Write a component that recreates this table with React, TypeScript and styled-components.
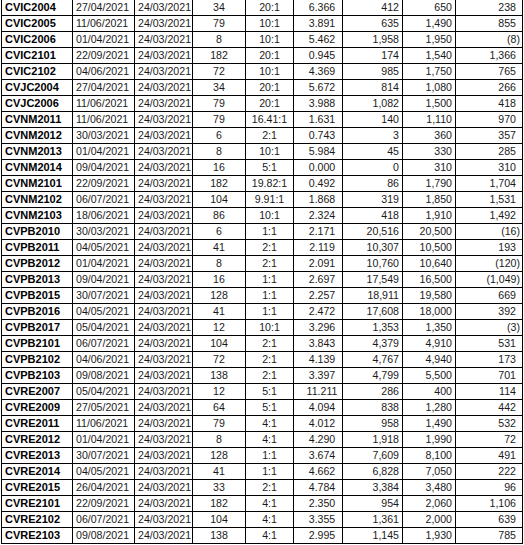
import React from "react";
import styled, { createGlobalStyle } from "styled-components";

const Global = createGlobalStyle`
  html, body { margin: 0; padding: 0; background: #fff; }
  body { font-family: "Liberation Sans", Arial, sans-serif; }
`;

type Row = [string, string, string, string, string, string, string, string];

const rows: Row[] = [
  ["CVIC2004", "27/04/2021", "34", "20:1", "6.366", "412", "650", "238"],
  ["CVIC2005", "11/06/2021", "79", "10:1", "3.891", "635", "1,490", "855"],
  ["CVIC2006", "01/04/2021", "8", "10:1", "5.462", "1,958", "1,950", "(8)"],
  ["CVIC2101", "22/09/2021", "182", "20:1", "0.945", "174", "1,540", "1,366"],
  ["CVIC2102", "04/06/2021", "72", "10:1", "4.369", "985", "1,750", "765"],
  ["CVJC2004", "27/04/2021", "34", "20:1", "5.672", "814", "1,080", "266"],
  ["CVJC2006", "11/06/2021", "79", "20:1", "3.988", "1,082", "1,500", "418"],
  ["CVNM2011", "11/06/2021", "79", "16.41:1", "1.631", "140", "1,110", "970"],
  ["CVNM2012", "30/03/2021", "6", "2:1", "0.743", "3", "360", "357"],
  ["CVNM2013", "01/04/2021", "8", "10:1", "5.984", "45", "330", "285"],
  ["CVNM2014", "09/04/2021", "16", "5:1", "0.000", "0", "310", "310"],
  ["CVNM2101", "22/09/2021", "182", "19.82:1", "0.492", "86", "1,790", "1,704"],
  ["CVNM2102", "06/07/2021", "104", "9.91:1", "1.868", "319", "1,850", "1,531"],
  ["CVNM2103", "18/06/2021", "86", "10:1", "2.324", "418", "1,910", "1,492"],
  ["CVPB2010", "30/03/2021", "6", "1:1", "2.171", "20,516", "20,500", "(16)"],
  ["CVPB2011", "04/05/2021", "41", "2:1", "2.119", "10,307", "10,500", "193"],
  ["CVPB2012", "01/04/2021", "8", "2:1", "2.091", "10,760", "10,640", "(120)"],
  ["CVPB2013", "09/04/2021", "16", "1:1", "2.697", "17,549", "16,500", "(1,049)"],
  ["CVPB2015", "30/07/2021", "128", "1:1", "2.257", "18,911", "19,580", "669"],
  ["CVPB2016", "04/05/2021", "41", "1:1", "2.472", "17,608", "18,000", "392"],
  ["CVPB2017", "05/04/2021", "12", "10:1", "3.296", "1,353", "1,350", "(3)"],
  ["CVPB2101", "06/07/2021", "104", "2:1", "3.843", "4,379", "4,910", "531"],
  ["CVPB2102", "04/06/2021", "72", "2:1", "4.139", "4,767", "4,940", "173"],
  ["CVPB2103", "09/08/2021", "138", "2:1", "3.397", "4,799", "5,500", "701"],
  ["CVRE2007", "05/04/2021", "12", "5:1", "11.211", "286", "400", "114"],
  ["CVRE2009", "27/05/2021", "64", "5:1", "4.094", "838", "1,280", "442"],
  ["CVRE2011", "11/06/2021", "79", "4:1", "4.012", "958", "1,490", "532"],
  ["CVRE2012", "01/04/2021", "8", "4:1", "4.290", "1,918", "1,990", "72"],
  ["CVRE2013", "30/07/2021", "128", "1:1", "3.674", "7,609", "8,100", "491"],
  ["CVRE2014", "04/05/2021", "41", "1:1", "4.662", "6,828", "7,050", "222"],
  ["CVRE2015", "26/04/2021", "33", "2:1", "4.784", "3,384", "3,480", "96"],
  ["CVRE2101", "22/09/2021", "182", "4:1", "2.350", "954", "2,060", "1,106"],
  ["CVRE2102", "06/07/2021", "104", "4:1", "3.355", "1,361", "2,000", "639"],
  ["CVRE2103", "09/08/2021", "138", "4:1", "2.995", "1,145", "1,930", "785"],
];

const widths = [71, 62, 58, 53, 48, 49, 60, 53, 67];

const Sheet = styled.table`
  border-collapse: collapse;
  table-layout: fixed;
  margin: -1px 0 0 1px;
  font-family: "Liberation Sans", Arial, sans-serif;
  color: #111;
`;

const Row = styled.tr`
  height: 16px;
`;

const Cell = styled.td<{ $align?: "left" | "center" | "right"; $bold?: boolean; $pr?: number; $pl?: number }>`
  border: 1px solid #000;
  padding: 0 ${(p) => p.$pr ?? 0}px 0 ${(p) => p.$pl ?? 0}px;
  height: 15px;
  line-height: 15px;
  white-space: nowrap;
  overflow: hidden;
  text-align: ${(p) => p.$align ?? "left"};
  font-size: ${(p) => (p.$bold ? "11px" : "10.6px")};
  font-weight: ${(p) => (p.$bold ? 700 : 400)};
  color: ${(p) => (p.$bold ? "#000" : "#1a1a1a")};
  vertical-align: middle;
`;

export default function App() {
  return (
    <>
      <Global />
      <Sheet>
        <colgroup>
          {widths.map((w, i) => (
            <col key={i} style={{ width: w }} />
          ))}
        </colgroup>
        <tbody>
          {rows.map((r) => {
            const neg = r[7].startsWith("(");
            return (
              <Row key={r[0]}>
                <Cell $bold $pl={3}>{r[0]}</Cell>
                <Cell $pl={3}>{r[1]}</Cell>
                <Cell $pl={3}>24/03/2021</Cell>
                <Cell $align="center">{r[2]}</Cell>
                <Cell $align="center">{r[3]}</Cell>
                <Cell $align="center" $pl={8}>{r[4]}</Cell>
                <Cell $align="right" $pr={3}>{r[5]}</Cell>
                <Cell $align="right" $pr={3}>{r[6]}</Cell>
                <Cell $align="right" $pr={neg ? 2 : 6}>{r[7]}</Cell>
              </Row>
            );
          })}
        </tbody>
      </Sheet>
    </>
  );
}
